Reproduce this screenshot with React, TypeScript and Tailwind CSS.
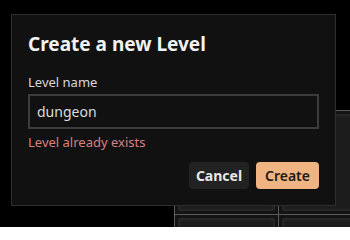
export default function App() {
  const tiles = [
    { x: 174, y: 110 },
    { x: 278, y: 110 },
    { x: 174, y: 214 },
    { x: 278, y: 214 },
  ];

  return (
    <div
      className="relative w-[350px] h-[227px] overflow-hidden bg-black"
      style={{ fontFamily: '"Noto Sans", "Open Sans", sans-serif' }}
    >
      {/* Level tiles on canvas */}
      {tiles.map((t) => (
        <div
          key={`${t.x}-${t.y}`}
          className="absolute w-[104px] h-[104px] border-l border-t border-[#5a5a5a] bg-[#141414] p-[3px]"
          style={{ left: t.x, top: t.y }}
        >
          <div className="w-full h-full rounded-[3px] bg-[#1c1c1c] shadow-[inset_0_0_4px_#3a3a3a]" />
        </div>
      ))}

      {/* Dialog */}
      <div className="absolute left-[11px] top-[14px] w-[325px] h-[192px] bg-[#111111] border border-[#2e2e2e] px-4 pt-[17px]">
        <h2 className="text-[19px] font-bold text-[#f2f2f2] leading-6">Create a new Level</h2>

        <label className="block mt-[16px] text-[13px] text-[#d8d8d8] leading-5">Level name</label>
        <div className="mt-[2px] h-[35px] border-2 border-[#3c3c3c] flex items-center px-[7px]">
          <span className="text-sm text-[#dcdcdc]">dungeon</span>
        </div>
        <p className="mt-[3px] text-[13px] text-[#d98080] leading-5">Level already exists</p>

        <div className="flex justify-end gap-[7px] mt-[10px]">
          <button className="w-[60px] h-[27px] rounded bg-[#222222] text-sm font-bold text-[#e8e8e8]">
            Cancel
          </button>
          <button className="w-[63px] h-[27px] rounded bg-[#f0b482] text-sm font-semibold text-[#1e1a16]">
            Create
          </button>
        </div>
      </div>
    </div>
  );
}
